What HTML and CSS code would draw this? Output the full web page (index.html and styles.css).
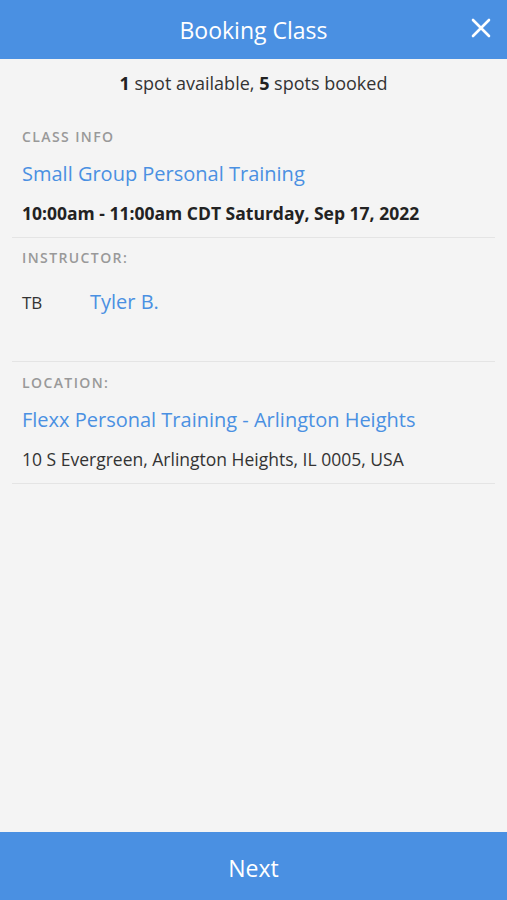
FILE: index.html
```html
<!DOCTYPE html>
<html lang="en">
<head>
    <meta charset="UTF-8">
    <meta name="viewport" content="width=device-width, initial-scale=1.0">
    <title>Booking Class</title>
    <link rel="stylesheet" href="styles.css">
</head>
<body>
    <div class="screen">
        <header class="topbar">
            <h1>Booking Class</h1>
            <button class="close-btn" aria-label="Close">
                <svg width="20" height="20" viewBox="0 0 20 20">
                    <path d="M2 2 L18 18 M18 2 L2 18" stroke="#fff" stroke-width="2.6" stroke-linecap="round"/>
                </svg>
            </button>
        </header>

        <main class="content">
            <p class="spots"><b>1</b> spot available, <b>5</b> spots booked</p>

            <section class="block">
                <div class="label">CLASS INFO</div>
                <div class="link">Small Group Personal Training</div>
                <div class="time">10:00am - 11:00am CDT Saturday, Sep 17, 2022</div>
            </section>

            <section class="block instructor">
                <div class="label">INSTRUCTOR:</div>
                <div class="person">
                    <span class="initials">TB</span>
                    <span class="link">Tyler B.</span>
                </div>
            </section>

            <section class="block">
                <div class="label">LOCATION:</div>
                <div class="link">Flexx Personal Training - Arlington Heights</div>
                <div class="address">10 S Evergreen, Arlington Heights, IL 0005, USA</div>
            </section>
        </main>

        <button class="next-btn">Next</button>
    </div>
</body>
</html>
```

FILE: styles.css
```css
body {
    margin: 0;
    font-family: 'Open Sans', 'Noto Sans', sans-serif;
    background: #f4f4f4;
    color: #222;
}
.screen {
    height: 900px;
    display: flex;
    flex-direction: column;
}
.topbar {
    height: 59px;
    background: #4a90e2;
    display: flex;
    align-items: center;
    justify-content: center;
    position: relative;
}
.topbar h1 {
    margin: 0;
    color: #fff;
    font-size: 23px;
    font-weight: 400;
}
.close-btn {
    position: absolute;
    right: 16px;
    top: 18px;
    background: none;
    border: none;
    padding: 0;
    width: 20px;
    height: 20px;
    cursor: pointer;
}
.content {
    flex: 1;
    padding: 0 12px;
}
.spots {
    margin: 0;
    padding-top: 12px;
    text-align: center;
    font-size: 18px;
    line-height: 24px;
    color: #333;
}
.spots b {
    color: #222;
}
.block {
    padding: 32px 10px 12px;
    border-bottom: 1px solid #e4e4e4;
}
.block + .block {
    padding-top: 10px;
}
.block:last-child {
    padding-top: 11px;
}
.label {
    font-size: 14px;
    letter-spacing: 1.4px;
    color: #999;
    font-weight: 600;
    line-height: 20px;
}
.link {
    color: #4a90e2;
    font-size: 20px;
    line-height: 27px;
    margin-top: 13px;
}
.time {
    font-size: 17.5px;
    font-weight: 700;
    line-height: 24px;
    margin-top: 14px;
    color: #222;
}
.address {
    font-size: 17.5px;
    line-height: 24px;
    margin-top: 14px;
    color: #333;
}
.instructor {
    padding-bottom: 46px;
}
.person {
    display: flex;
    align-items: baseline;
    margin-top: 20px;
}
.person .initials {
    width: 68px;
    font-size: 17px;
    color: #333;
}
.person .link {
    margin-top: 0;
}
.next-btn {
    height: 68px;
    border: none;
    background: #4a90e2;
    color: #fff;
    font-family: inherit;
    font-size: 23px;
    padding-top: 4px;
    cursor: pointer;
}
```
